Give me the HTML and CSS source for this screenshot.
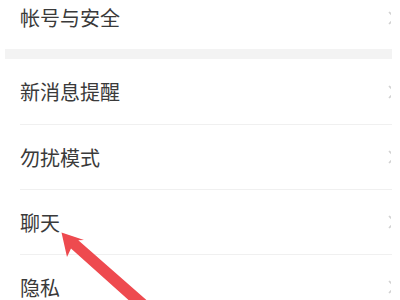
FILE: index.html
```html
<!DOCTYPE html>
<html lang="zh-CN">
<head>
<meta charset="utf-8">
<title>设置</title>
<link rel="stylesheet" href="styles.css">
</head>
<body>
<div class="screen">
  <div class="group">
    <div class="row row-first"><div class="row-inner"><span class="label">帐号与安全</span><span class="chev"><svg width="8" height="14" viewBox="0 0 8 14"><polyline points="1,1 7,7 1,13" /></svg></span></div></div>
  </div>
  <div class="gap"></div>
  <div class="group">
    <div class="row row-tall"><div class="row-inner"><span class="label">新消息提醒</span><span class="chev"><svg width="8" height="14" viewBox="0 0 8 14"><polyline points="1,1 7,7 1,13" /></svg></span></div></div>
    <div class="row"><div class="row-inner"><span class="label">勿扰模式</span><span class="chev"><svg width="8" height="14" viewBox="0 0 8 14"><polyline points="1,1 7,7 1,13" /></svg></span></div></div>
    <div class="row"><div class="row-inner"><span class="label">聊天</span><span class="chev"><svg width="8" height="14" viewBox="0 0 8 14"><polyline points="1,1 7,7 1,13" /></svg></span></div></div>
    <div class="row"><div class="row-inner"><span class="label">隐私</span><span class="chev"><svg width="8" height="14" viewBox="0 0 8 14"><polyline points="1,1 7,7 1,13" /></svg></span></div></div>
  </div>
  <svg class="arrow" width="400" height="300" viewBox="0 0 400 300">
    <polygon points="61.5,232.5 84,240 78.3,240.2 152,304.9 144,313.9 71,248.4 67,257" />
  </svg>
</div>
</body>
</html>
```
FILE: styles.css
```css
html, body {
  margin: 0;
  padding: 0;
  background: #ffffff;
  overflow: hidden;
}
.screen {
  position: relative;
  width: 400px;
  height: 300px;
  overflow: hidden;
  box-sizing: border-box;
  padding: 0 8px 0 5px;
}
.group {
  background: #ffffff;
}
.group:first-child {
  margin-top: -14px;
}
.gap {
  height: 10px;
  background: #f3f3f3;
}
.row {
  padding-left: 15px;
}
.row-inner {
  height: 64px;
  display: flex;
  align-items: center;
  justify-content: space-between;
  border-bottom: 1px solid #f0f0f0;
}
.row-first .row-inner {
  height: 63px;
  border-bottom: none;
}
.row-tall .row-inner {
  height: 65px;
}
.label {
  font-family: "Noto Sans CJK SC", "Noto Sans", sans-serif;
  font-size: 20px;
  color: #3a3a3a;
}
.chev {
  width: 3px;
  height: 14px;
  overflow: hidden;
  margin-right: 1px;
  display: block;
}
.chev svg {
  display: block;
}
.chev polyline {
  fill: none;
  stroke: #d2d2d2;
  stroke-width: 1.6;
}
.arrow {
  position: absolute;
  left: 0;
  top: 0;
  pointer-events: none;
}
.arrow polygon {
  fill: #ee4a4f;
}
```
